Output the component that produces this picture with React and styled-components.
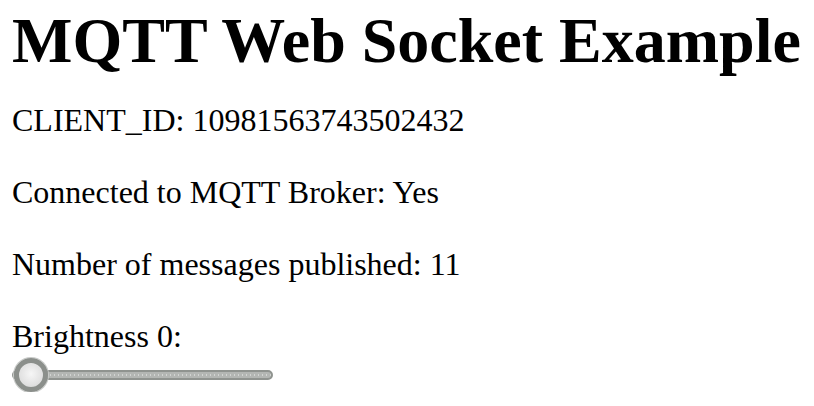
import React, { useState } from "react";
import styled, { createGlobalStyle } from "styled-components";

const GlobalStyle = createGlobalStyle`
  html, body {
    margin: 0;
    padding: 0;
    background: #fff;
  }
  body {
    font-family: "Liberation Serif", "Times New Roman", serif;
    color: #000;
  }
`;

const Page = styled.main`
  padding: 9px 12px 0;
`;

const Title = styled.h1`
  font-size: 64px;
  line-height: 64px;
  font-weight: bold;
  margin: 0 0 27px;
  white-space: nowrap;
`;

const Line = styled.p`
  font-size: 32px;
  line-height: 40px;
  margin: 0 0 ${(props) => (props.$last ? "0" : "32px")};
`;

const Range = styled.input`
  display: block;
  -webkit-appearance: none;
  appearance: none;
  width: 261px;
  height: 34px;
  margin: 2px 0 0;
  padding: 0;
  background: transparent;

  &::-webkit-slider-runnable-track {
    height: 10px;
    border-radius: 5px;
    box-sizing: border-box;
    border: 2px solid #8f938f;
    background:
      repeating-linear-gradient(90deg, #d2d4d2 0 1px, transparent 1px 4px) 0 2px / 100% 2px no-repeat,
      #b3b6b3;
  }

  &::-webkit-slider-thumb {
    -webkit-appearance: none;
    width: 34px;
    height: 34px;
    margin-top: -14px;
    border-radius: 50%;
    box-sizing: border-box;
    border: 5px solid #8b8f8b;
    background: radial-gradient(circle at 50% 45%, #f6f6f6 0, #e2e2e2 60%, #cfd1cf 100%);
    box-shadow: 0 0 0 1px #c9cbc9;
  }
`;

function App() {
  const [brightness, setBrightness] = useState(0);

  return (
    <>
      <GlobalStyle />
      <Page>
        <Title>MQTT Web Socket Example</Title>
        <Line>CLIENT_ID: 10981563743502432</Line>
        <Line>Connected to MQTT Broker: Yes</Line>
        <Line>Number of messages published: 11</Line>
        <Line $last>Brightness {brightness}:</Line>
        <Range
          type="range"
          min="0"
          max="100"
          value={brightness}
          onChange={(e) => setBrightness(Number(e.target.value))}
        />
      </Page>
    </>
  );
}

export default App;
